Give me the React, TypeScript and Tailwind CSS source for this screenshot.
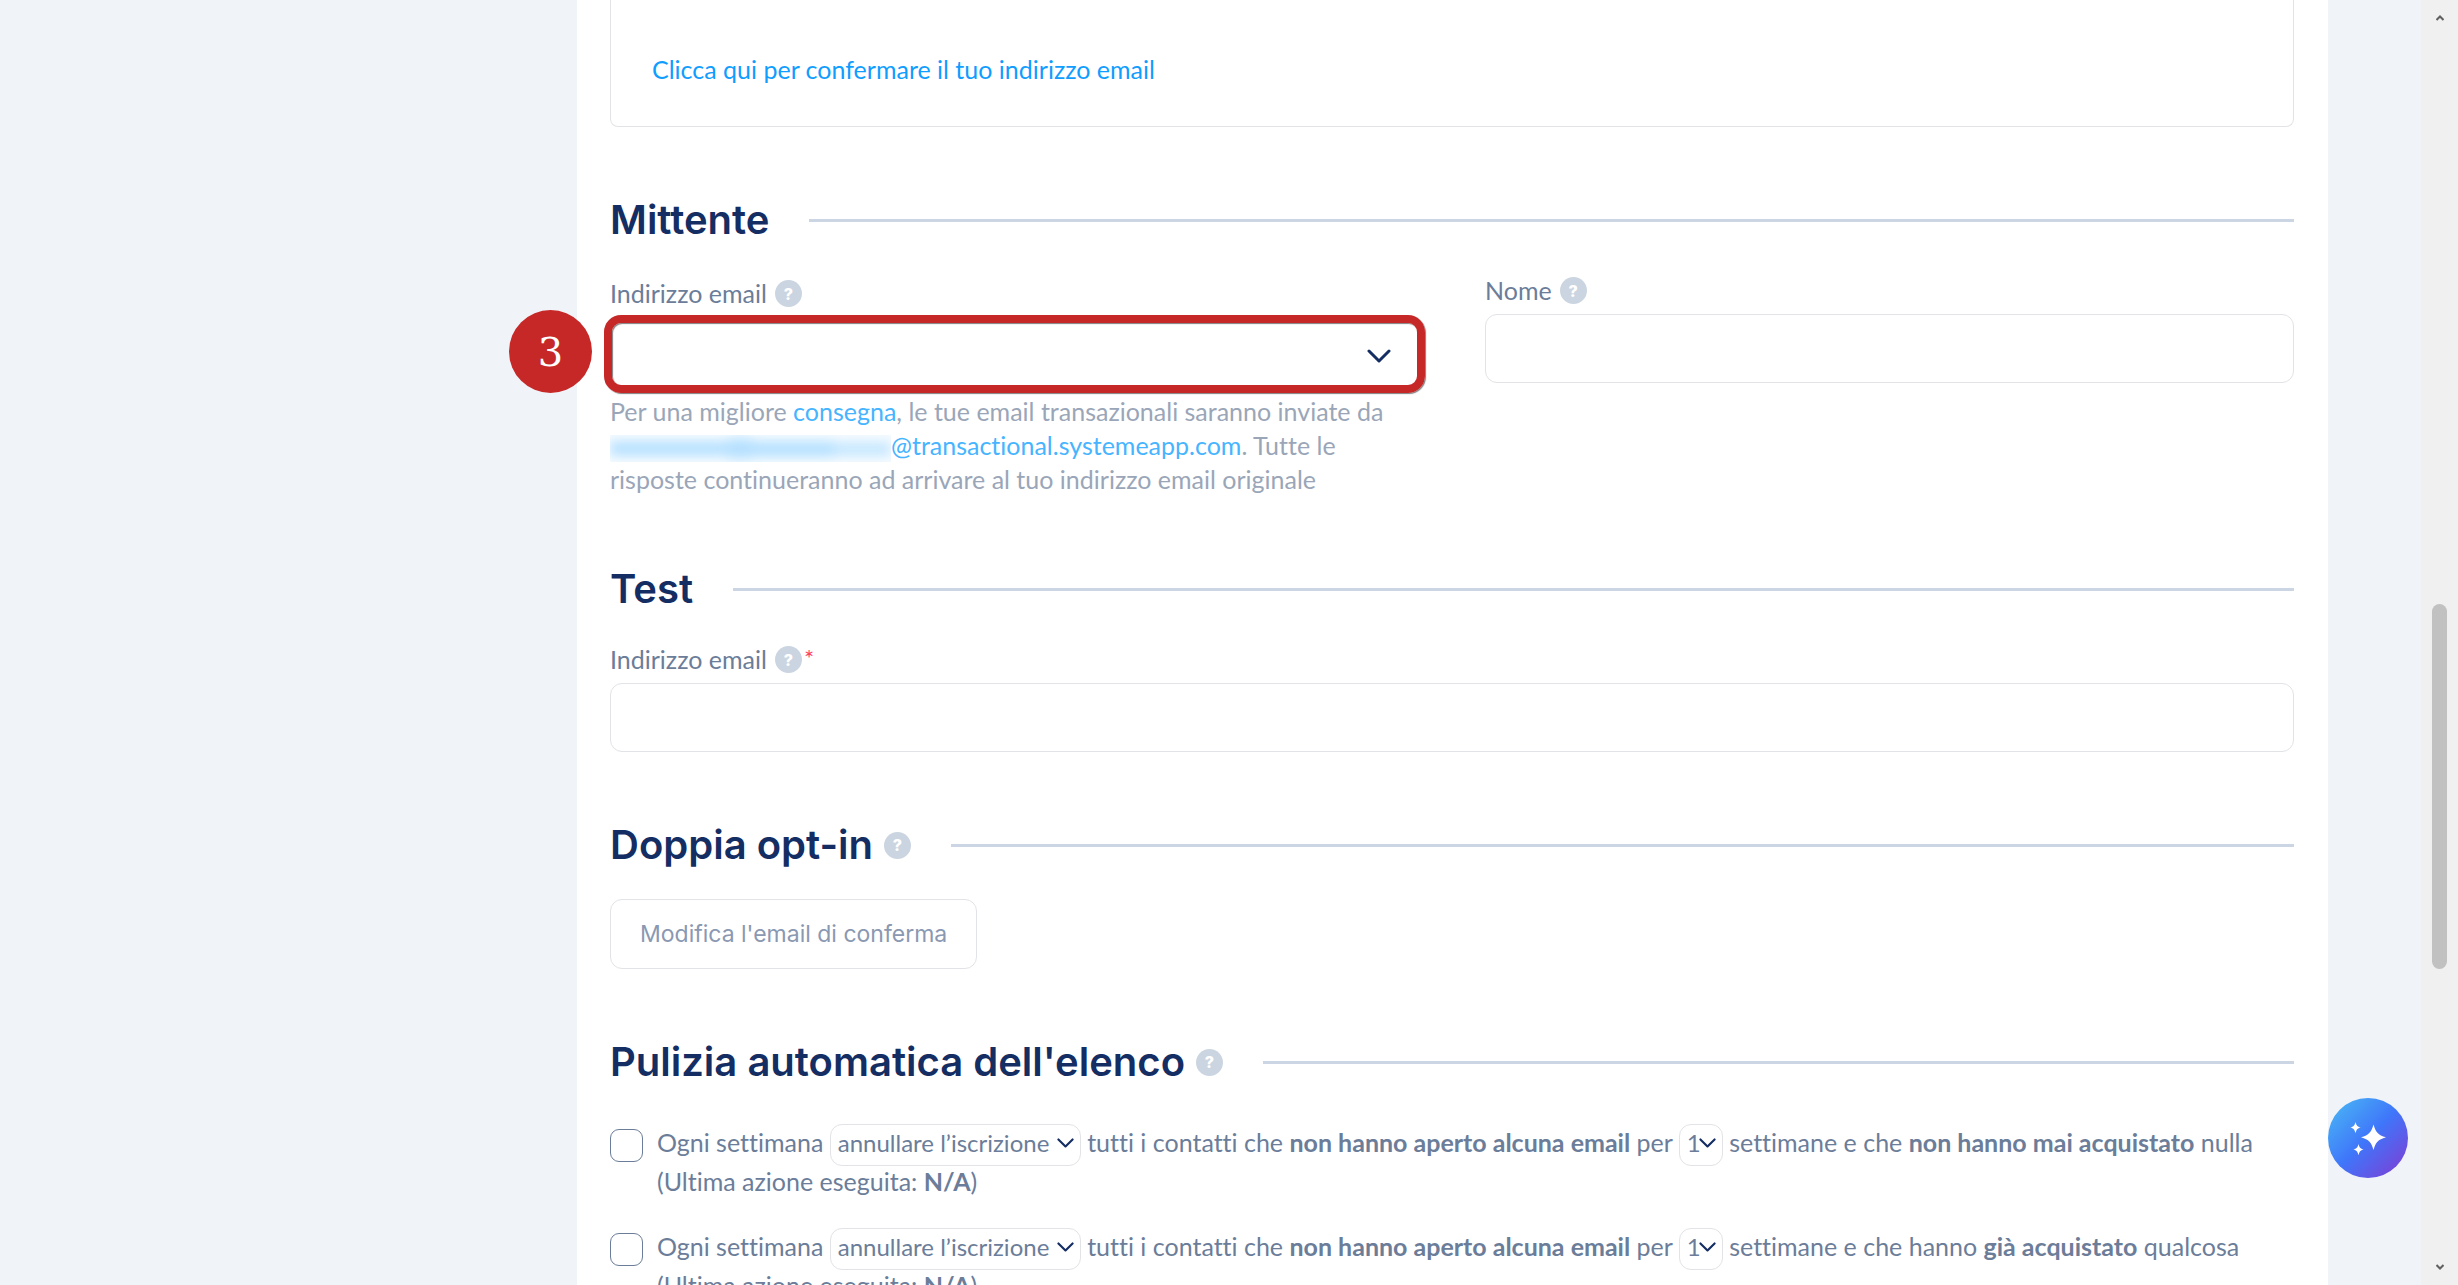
import { useState } from 'react';
import type { ReactNode } from 'react';

const HelpDot = () => (
    <span className="flex size-[27px] shrink-0 items-center justify-center rounded-full bg-[#cbd5e1] font-['Inter',sans-serif] text-base leading-none font-extrabold text-white">
        ?
    </span>
);

const Chevron = ({ className }: { className: string }) => (
    <svg viewBox="0 0 24 14" fill="none" stroke="#142d63" strokeWidth="3" strokeLinecap="round" strokeLinejoin="round" className={className} aria-hidden="true">
        <path d="M2 2l10 10L22 2" />
    </svg>
);

const SectionTitle = ({ children, help }: { children: ReactNode; help?: boolean }) => (
    <div className="flex items-center gap-10">
        <div className="flex items-center gap-[11px]">
            <h2 className="font-['Inter',sans-serif] text-[40px] leading-[48px] font-semibold text-[#142d63]">{children}</h2>
            {help && <HelpDot />}
        </div>
        <div className="h-[3px] flex-1 bg-[#cbd5e3]" />
    </div>
);

const FieldLabel = ({ htmlFor, children, required }: { htmlFor: string; children: ReactNode; required?: boolean }) => (
    <div className="flex h-[27px] items-center">
        <label htmlFor={htmlFor} className="mr-2 text-[25px] leading-[27px] text-[#6b7d99]">{children}</label>
        <HelpDot />
        {required && <span className="ml-0.5 self-start text-2xl leading-6 text-[#ff4060]">*</span>}
    </div>
);

const InlineSelect = ({ label, options, className }: { label: string; options: string[]; className: string }) => (
    <span className="relative -mb-1 inline-block">
        <select aria-label={label} className={`h-[42px] appearance-none rounded-xl border border-[#e1e3e6] bg-white pb-1 pl-[7px] text-2xl ${className}`}>
            {options.map(o => <option key={o}>{o}</option>)}
        </select>
        <Chevron className="pointer-events-none absolute top-[15px] right-[7px] w-[17px]" />
    </span>
);

const CleanupRule = ({ id, children }: { id: string; children: ReactNode }) => {
    const [checked, setChecked] = useState(false);

    return (
        <div className="flex gap-[14px] text-[25px] leading-[38px] text-[#6b7d99]">
            <input
                id={id}
                type="checkbox"
                aria-labelledby={`${id}-text`}
                checked={checked}
                onChange={e => setChecked(e.target.checked)}
                className="mt-1.5 size-[33px] shrink-0 appearance-none rounded-[9px] border border-[#6b7d99] bg-white checked:bg-[#6b7d99]"
            />
            <div id={`${id}-text`}>
                Ogni settimana{' '}
                <InlineSelect label="Azione" options={['annullare l’iscrizione', 'eliminare']} className="w-[251px]" />{' '}
                tutti i contatti che <strong>non hanno aperto alcuna email</strong> per{' '}
                <InlineSelect label="Settimane" options={['1', '2', '3', '4']} className="w-11" />{' '}
                {children}
                <br />
                (Ultima azione eseguita: <strong>N/A</strong>)
            </div>
        </div>
    );
};

const inputClass = 'h-[69px] w-full rounded-xl border border-[#e1e3e6] bg-white px-5 text-[25px] text-[#142d63]';

const Scrollbar = () => (
    <div className="flex w-[37px] shrink-0 flex-col items-center bg-[#f0f0f0] py-[15px]" aria-hidden="true">
        <svg viewBox="0 0 8 6" className="h-1.5 w-2" fill="none" stroke="#606060" strokeWidth="2">
            <path d="M0.5 5L4 1.5L7.5 5" />
        </svg>
        <div className="grow-[583]" />
        <div className="w-[15px] grow-[365] rounded-full bg-[#c1c1c1]" />
        <div className="grow-[295]" />
        <svg viewBox="0 0 8 6" className="h-1.5 w-2" fill="none" stroke="#606060" strokeWidth="2">
            <path d="M0.5 1L4 4.5L7.5 1" />
        </svg>
    </div>
);

export default function App() {
    return (
        <div className="flex h-screen overflow-hidden bg-[#f0f4f9] font-['Lato',sans-serif] [font-variant-ligatures:none]">
            <aside className="w-[484px] shrink-0" />

            <main className="min-w-0 flex-1 px-[93px]">
                <div className="min-h-full bg-white pr-[34px] pb-16 pl-[33px]">
                    <section className="rounded-b-lg border border-t-0 border-[#e1e3e6] pt-[52px] pb-10 pl-[41px]">
                        <a href="#conferma" className="block text-[25px] leading-[34px] text-[#0f9dff]">
                            Clicca qui per confermare il tuo indirizzo email
                        </a>
                    </section>

                    {/* Sender */}
                    <section className="mt-[69px]">
                        <SectionTitle>Mittente</SectionTitle>
                        <div className="mt-[33px] grid grid-cols-2 gap-[66px]">
                            <div className="pt-[3px]">
                                <FieldLabel htmlFor="sender-email">Indirizzo email</FieldLabel>
                                <div className="relative mt-[14px]">
                                    <select id="sender-email" className="h-[66px] w-full appearance-none rounded-xl bg-white px-5 text-[25px]">
                                        <option value="" />
                                    </select>
                                    <Chevron className="pointer-events-none absolute top-7 right-7 w-6" />
                                    <div className="pointer-events-none absolute -inset-1.5 rounded-[17px] border-8 border-[#c62828] shadow-[1px_1px_1px_rgba(0,0,0,0.5),inset_1px_1px_1px_rgba(0,0,0,0.5)]" />
                                    <span className="absolute -top-[11px] right-full mr-[18px] flex size-[83px] items-center justify-center rounded-full bg-[#c62828] font-['DejaVu_Serif',serif] text-[40px] leading-none text-white">
                                        3
                                    </span>
                                </div>
                                <p className="mt-[7px] text-[25px] leading-[34px] text-[#9aa6b8]">
                                    Per una migliore <a href="#consegna" className="text-[#46b4ff]">consegna</a>, le tue email transazionali saranno inviate da{' '}
                                    {/* Masked account name */}
                                    <span className="inline-block h-[27px] w-[281px] overflow-hidden bg-[#f8fcff] align-middle" aria-hidden="true">
                                        <span className="flex h-[27px] items-center blur-[6px]">
                                            <span className="h-[15px] w-[118px] bg-[#b5e0ff]" />
                                            <span className="h-[21px] w-[24px] bg-[#b5e0ff]" />
                                            <span className="h-[16px] w-[82px] bg-[#b5e0ff]" />
                                            <span className="h-[14px] w-[57px] bg-[#c4e6ff]" />
                                        </span>
                                    </span>
                                    <span className="text-[#46b4ff]">@transactional.systemeapp.com</span>. Tutte le risposte continueranno ad arrivare al tuo indirizzo email originale
                                </p>
                            </div>
                            <div>
                                <FieldLabel htmlFor="sender-name">Nome</FieldLabel>
                                <input id="sender-name" type="text" className={`mt-2.5 ${inputClass}`} />
                            </div>
                        </div>
                    </section>

                    {/* Test */}
                    <section className="mt-[69px]">
                        <SectionTitle>Test</SectionTitle>
                        <div className="mt-[33px]">
                            <FieldLabel htmlFor="test-email" required>Indirizzo email</FieldLabel>
                            <input id="test-email" type="email" required className={`mt-2.5 ${inputClass}`} />
                        </div>
                    </section>

                    {/* Double opt-in */}
                    <section className="mt-[69px]">
                        <SectionTitle help>Doppia opt-in</SectionTitle>
                        <button type="button" className="mt-[30px] h-[70px] rounded-xl border border-[#e1e3e6] px-[29px] font-['Inter',sans-serif] text-[23px] text-[#8a98b2]">
                            Modifica l'email di conferma
                        </button>
                    </section>

                    {/* List cleanup */}
                    <section className="mt-[69px]">
                        <SectionTitle help>Pulizia automatica dell'elenco</SectionTitle>
                        <div className="mt-[37px] flex flex-col gap-[27px]">
                            <CleanupRule id="cleanup-never-bought">
                                settimane e che <strong>non hanno mai acquistato</strong> nulla
                            </CleanupRule>
                            <CleanupRule id="cleanup-bought">
                                settimane e che hanno <strong>già acquistato</strong> qualcosa
                            </CleanupRule>
                        </div>
                    </section>
                </div>
            </main>

            <Scrollbar />

            {/* Assistant */}
            <button type="button" aria-label="Assistente AI" className="fixed right-[50px] bottom-[107px] size-20 rounded-full bg-[linear-gradient(135deg,#48aef5_10%,#3f76fa_50%,#7d3fd6_95%)]">
                <svg viewBox="0 0 80 80" fill="#fff" className="size-20">
                    <path d="M45.5 26.5c2 7.5 4.5 10.5 12.5 12.8c-8 2.3 -10.5 5.3 -12.5 12.8c-2 -7.5 -4.5 -10.5 -12.5 -12.8c8 -2.3 10.5 -5.3 12.5 -12.8z" />
                    <path d="M27.5 24c0.9 3.5 1.8 4.7 5.3 5.6c-3.5 0.9 -4.4 2.1 -5.3 5.6c-0.9 -3.5 -1.8 -4.7 -5.3 -5.6c3.5 -0.9 4.4 -2.1 5.3 -5.6z" />
                    <path d="M30.5 46c0.9 3.5 1.8 4.7 5.3 5.6c-3.5 0.9 -4.4 2.1 -5.3 5.6c-0.9 -3.5 -1.8 -4.7 -5.3 -5.6c3.5 -0.9 4.4 -2.1 5.3 -5.6z" />
                </svg>
            </button>
        </div>
    );
}
